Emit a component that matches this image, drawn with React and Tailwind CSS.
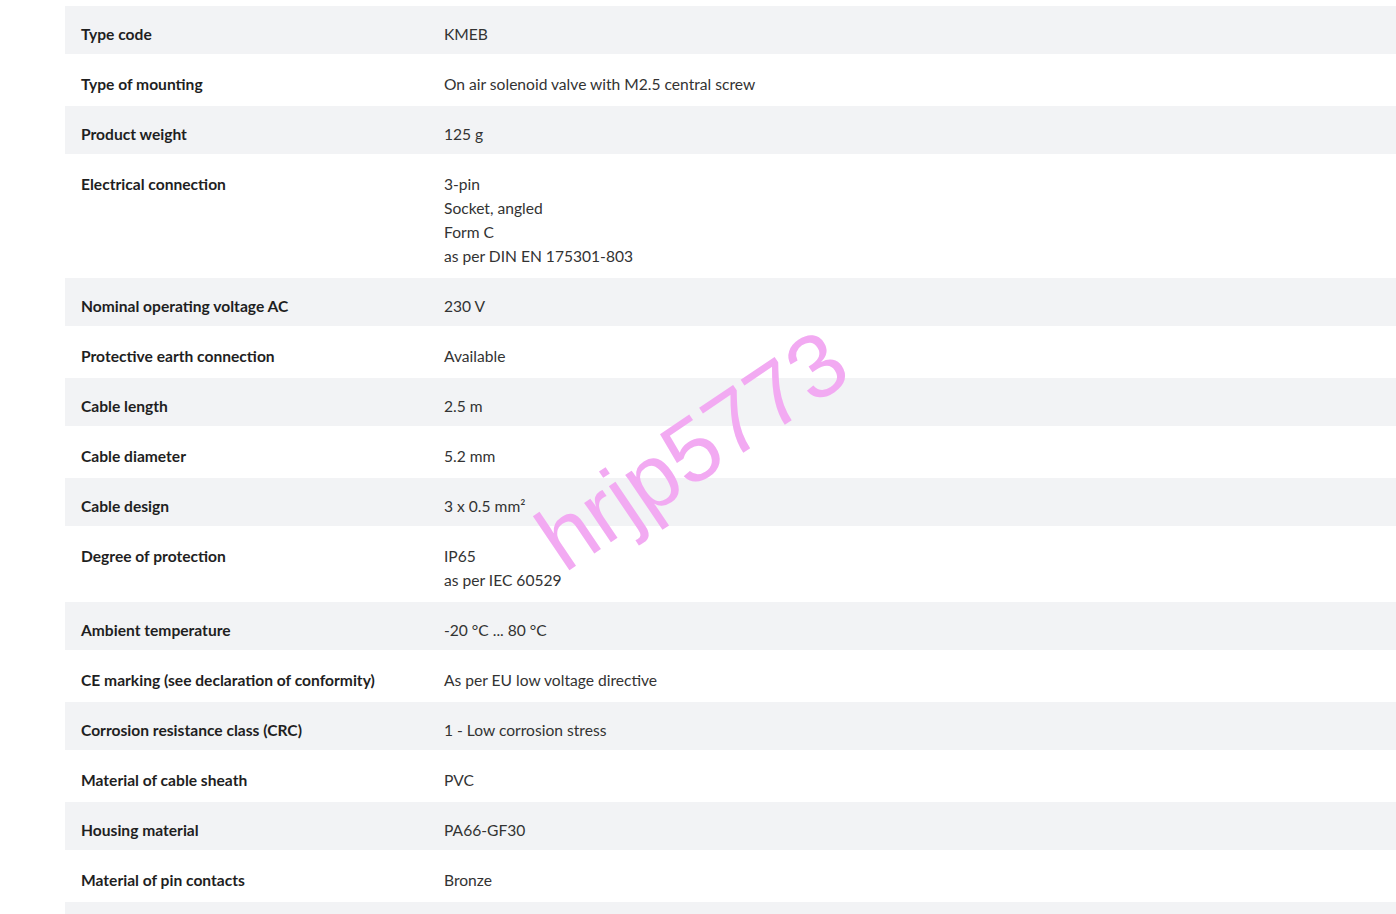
const specs = [
  ['Type code', ['KMEB']],
  ['Type of mounting', ['On air solenoid valve with M2.5 central screw']],
  ['Product weight', ['125 g']],
  ['Electrical connection', ['3-pin', 'Socket, angled', 'Form C', 'as per DIN EN 175301-803']],
  ['Nominal operating voltage AC', ['230 V']],
  ['Protective earth connection', ['Available']],
  ['Cable length', ['2.5 m']],
  ['Cable diameter', ['5.2 mm']],
  ['Cable design', ['3 x 0.5 mm²']],
  ['Degree of protection', ['IP65', 'as per IEC 60529']],
  ['Ambient temperature', ['-20 °C ... 80 °C']],
  ['CE marking (see declaration of conformity)', ['As per EU low voltage directive']],
  ['Corrosion resistance class (CRC)', ['1 - Low corrosion stress']],
  ['Material of cable sheath', ['PVC']],
  ['Housing material', ['PA66-GF30']],
  ['Material of pin contacts', ['Bronze']],
  ['', ['']],
];

export default function App() {
  return (
    <div className="relative h-[914px] overflow-hidden bg-white font-['Lato','Liberation_Sans',sans-serif] text-[15.6px] leading-6 text-[#333]">
      <div className="ml-[65px] flex w-[1400px] flex-col gap-[2px] pt-[6px]">
        {specs.map(([label, values], i) => (
          <div key={i} className={`flex pt-4 pb-2 ${i % 2 === 0 ? 'bg-[#f2f3f5]' : 'bg-white'}`}>
            <div className="w-[379px] shrink-0 pl-4 font-bold text-[#1f1f1f]">{label}</div>
            <div className="flex flex-col">
              {values.map((v, j) => (
                <span key={j}>{v}</span>
              ))}
            </div>
          </div>
        ))}
      </div>
      {/* watermark */}
      <div className="pointer-events-none absolute left-[692px] top-[450px] -translate-x-1/2 -translate-y-1/2 -rotate-[34deg] whitespace-nowrap font-['Liberation_Sans',sans-serif] text-[90px] leading-none text-[#f2aaf2]">
        hrjp5773
      </div>
    </div>
  );
}
